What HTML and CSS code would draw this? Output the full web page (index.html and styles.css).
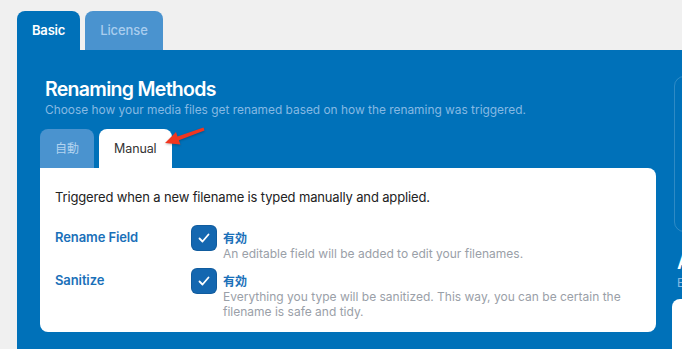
FILE: index.html
```html
<!DOCTYPE html>
<html>
<head>
<meta charset="utf-8">
<link rel="stylesheet" href="styles.css">
</head>
<body>
<div class="tabs">
  <div class="tab active">Basic</div>
  <div class="tab">License</div>
</div>
<div class="panel">
  <div class="main">
    <h2 class="title">Renaming Methods</h2>
    <p class="sub">Choose how your media files get renamed based on how the renaming was triggered.</p>
    <div class="subtabs">
      <div class="subtab">自動</div>
      <div class="subtab active">Manual</div>
      <svg class="arrow" width="44" height="24" viewBox="0 0 44 24">
        <path d="M1 18 L16.4 19.6 L14.9 15.2 L40.5 5.4 L39.5 2.6 L13.5 11.4 L12 7 Z" fill="#f2361f"/>
      </svg>
    </div>
    <div class="card">
      <p class="intro">Triggered when a new filename is typed manually and applied.</p>
      <div class="row">
        <div class="label">Rename Field</div>
        <div class="check"><svg width="14" height="12" viewBox="0 0 14 12"><path d="M2.5 6.5 L5.5 9.5 L11.5 2.5" fill="none" stroke="#fff" stroke-width="1.8" stroke-linecap="round" stroke-linejoin="round"/></svg></div>
        <div class="opt">
          <div class="on">有効</div>
          <div class="desc">An editable field will be added to edit your filenames.</div>
        </div>
      </div>
      <div class="row">
        <div class="label">Sanitize</div>
        <div class="check"><svg width="14" height="12" viewBox="0 0 14 12"><path d="M2.5 6.5 L5.5 9.5 L11.5 2.5" fill="none" stroke="#fff" stroke-width="1.8" stroke-linecap="round" stroke-linejoin="round"/></svg></div>
        <div class="opt">
          <div class="on">有効</div>
          <div class="desc">Everything you type will be sanitized. This way, you can be certain the filename is safe and tidy.</div>
        </div>
      </div>
    </div>
  </div>
  <div class="side">
    <div class="outline"></div>
    <h2 class="title side-title">Advanced</h2>
    <p class="sub side-sub">Extra settings</p>
    <div class="side-card"></div>
  </div>
</div>
</body>
</html>
```
FILE: styles.css
```css
html, body {
  margin: 0;
  padding: 0;
  background: #f0f0f0;
  font-family: Inter, "Noto Sans CJK JP", sans-serif;
  overflow: hidden;
  width: 682px;
  height: 349px;
}
.tabs {
  display: flex;
  gap: 5px;
  padding: 11px 0 0 17px;
  height: 39px;
}
.tab {
  height: 39px;
  box-sizing: border-box;
  padding: 0 15px;
  line-height: 39px;
  font-size: 13px;
  font-weight: 600;
  letter-spacing: -0.2px;
  color: #a9cdee;
  background: #4a93cf;
  border-radius: 8px 8px 0 0;
}
.tab:not(.active) {
  font-weight: 500;
  letter-spacing: -0.1px;
}
.tab.active {
  background: #0071b9;
  color: #fff;
}
.panel {
  margin-left: 17px;
  background: #0071b9;
  height: 299px;
  display: flex;
  gap: 16px;
  padding: 26px 0 0 23px;
  box-sizing: border-box;
  overflow: hidden;
}
.main {
  width: 616px;
  flex: none;
}
.title {
  margin: 0;
  padding-left: 5px;
  color: #fff;
  font-size: 19.5px;
  font-weight: 600;
  line-height: 26px;
  letter-spacing: -0.7px;
}
.sub {
  margin: 0;
  padding-left: 5px;
  color: #86b9e3;
  font-size: 11.9px;
  line-height: 16px;
}
.subtabs {
  position: relative;
  display: flex;
  gap: 5px;
  margin-top: 11px;
  height: 39px;
}
.subtab {
  height: 39px;
  box-sizing: border-box;
  padding: 0 15px;
  line-height: 39px;
  font-size: 12px;
  color: #b3d3ef;
  background: #4a93cf;
  border-radius: 8px 8px 0 0;
}
.subtab.active {
  background: #fff;
  color: #333;
  font-size: 12.5px;
  padding: 0 15px;
  letter-spacing: -0.1px;
}
.arrow {
  position: absolute;
  left: 124px;
  top: -4px;
  filter: drop-shadow(0 1px 1px rgba(0,0,0,0.25));
}
.card {
  background: #fff;
  border-radius: 0 8px 8px 8px;
  padding: 20px 15px 0;
  height: 164px;
  box-sizing: border-box;
}
.intro {
  margin: 0 0 19px;
  font-size: 13px;
  letter-spacing: -0.15px;
  line-height: 18px;
  color: #222;
}
.row {
  display: flex;
  align-items: flex-start;
  margin-bottom: 7px;
}
.label {
  width: 136px;
  flex: none;
  font-size: 13px;
  font-weight: 600;
  letter-spacing: -0.1px;
  color: #1a70b9;
  line-height: 18px;
  padding-top: 3px;
}
.check {
  width: 26px;
  height: 26px;
  flex: none;
  box-sizing: border-box;
  border-radius: 6px;
  background: #1467b0;
  display: flex;
  align-items: center;
  justify-content: center;
  box-shadow: inset 0 0 0 1px rgba(0,0,0,0.1);
}
.opt {
  margin-left: 6px;
  width: 410px;
}
.on {
  font-size: 12px;
  font-weight: 700;
  color: #1a70b9;
  line-height: 15px;
  padding-top: 6px;
}
.desc {
  font-size: 12px;
  color: #9aa0a8;
  line-height: 15px;
}
.side {
  width: 300px;
  flex: none;
  padding-left: 2px;
}
.outline {
  height: 156px;
  border: 1px solid rgba(255,255,255,0.18);
  border-radius: 10px;
  box-sizing: border-box;
  margin-bottom: 17px;
}
.side-title {
  padding-left: 3px;
}
.side-sub {
  padding-left: 3px;
}
.side-card {
  margin-left: -2px;
  margin-top: 8px;
  background: #fff;
  height: 60px;
  border-radius: 8px 0 0 0;
}
```
